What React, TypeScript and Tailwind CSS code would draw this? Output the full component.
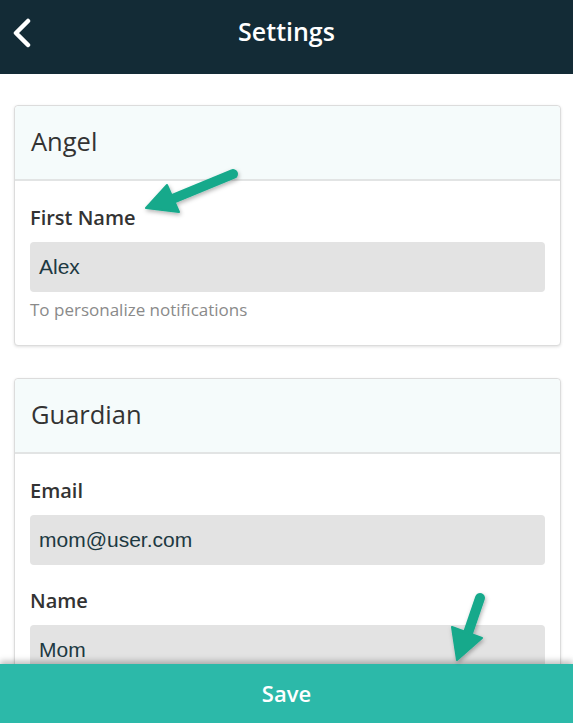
import React from 'react';

const ui = { fontFamily: '"Open Sans", "Noto Sans", sans-serif' };
const field = { fontFamily: '"Liberation Sans", Arial, sans-serif' };

function Field({ label, value, hint, first }: { label: string; value: string; hint?: string; first?: boolean }) {
  return (
    <div className={first ? '' : 'mt-[24px]'}>
      <p className="text-[20px] leading-6 font-semibold text-[#333]">{label}</p>
      <div
        className="mt-3 h-[50px] rounded bg-[#e3e3e3] px-[9px] flex items-center text-[21px] text-[#1d3942]"
        style={field}
      >
        {value}
      </div>
      {hint && <p className="mt-2 text-[17px] leading-5 text-[#8a8a8a]">{hint}</p>}
    </div>
  );
}

function Card({ title, children }: { title: string; children: React.ReactNode }) {
  return (
    <div className="rounded border border-[#dcdcdc] bg-white shadow-[0_1px_3px_rgba(0,0,0,0.12)]">
      <div className="h-[75px] flex items-center px-4 bg-[#f5fbfb] border-b-2 border-[#e2e4e4] rounded-t">
        <h2 className="text-[25.5px] text-[#333] pb-[2px]">{title}</h2>
      </div>
      <div className="px-[15px] pt-[25px] pb-[25px]">{children}</div>
    </div>
  );
}

export default function App() {
  return (
    <div className="relative w-[573px] h-[723px] flex flex-col overflow-hidden bg-white" style={ui}>
      {/* Top bar */}
      <header className="h-[74px] shrink-0 bg-[#132b36] flex items-center relative">
        <svg className="absolute left-[11px] top-[18px]" width="22" height="30" viewBox="0 0 22 30">
          <path d="M17 3 L5 15 L17 27" fill="none" stroke="white" strokeWidth="4.5" strokeLinecap="round" strokeLinejoin="round" />
        </svg>
        <h1 className="w-full text-center text-[25px] font-semibold text-white pb-[10px]">Settings</h1>
      </header>

      {/* Content */}
      <main className="flex-1 overflow-hidden pl-[14px] pr-[12px] pt-[31px] flex flex-col gap-8">
        <Card title="Angel">
          <Field first label="First Name" value="Alex" hint="To personalize notifications" />
        </Card>
        <Card title="Guardian">
          <Field first label="Email" value="mom@user.com" />
          <Field label="Name" value="Mom" />
        </Card>
      </main>

      {/* Save bar */}
      <footer className="h-[59px] shrink-0 bg-[#2cb9a9] flex items-center justify-center shadow-[0_-3px_6px_rgba(0,0,0,0.25)] z-10">
        <span className="text-[22px] font-semibold text-white">Save</span>
      </footer>

      {/* Annotation arrows */}
      <svg className="absolute inset-0 z-20 pointer-events-none" width="573" height="723" viewBox="0 0 573 723">
        <defs>
          <filter id="sh" x="-20%" y="-20%" width="140%" height="140%">
            <feDropShadow dx="1" dy="2" stdDeviation="2" floodColor="#000" floodOpacity="0.3" />
          </filter>
        </defs>
        <g filter="url(#sh)" fill="#14a98b" stroke="#14a98b">
          <line x1="233" y1="174" x2="170" y2="200" strokeWidth="10" strokeLinecap="round" />
          <polygon points="146,208 167,185 179,212" strokeWidth="2" strokeLinejoin="round" />
          <line x1="480" y1="598" x2="467" y2="636" strokeWidth="10" strokeLinecap="round" />
          <polygon points="457,660 452,627 482,638" strokeWidth="2" strokeLinejoin="round" />
        </g>
      </svg>
    </div>
  );
}
